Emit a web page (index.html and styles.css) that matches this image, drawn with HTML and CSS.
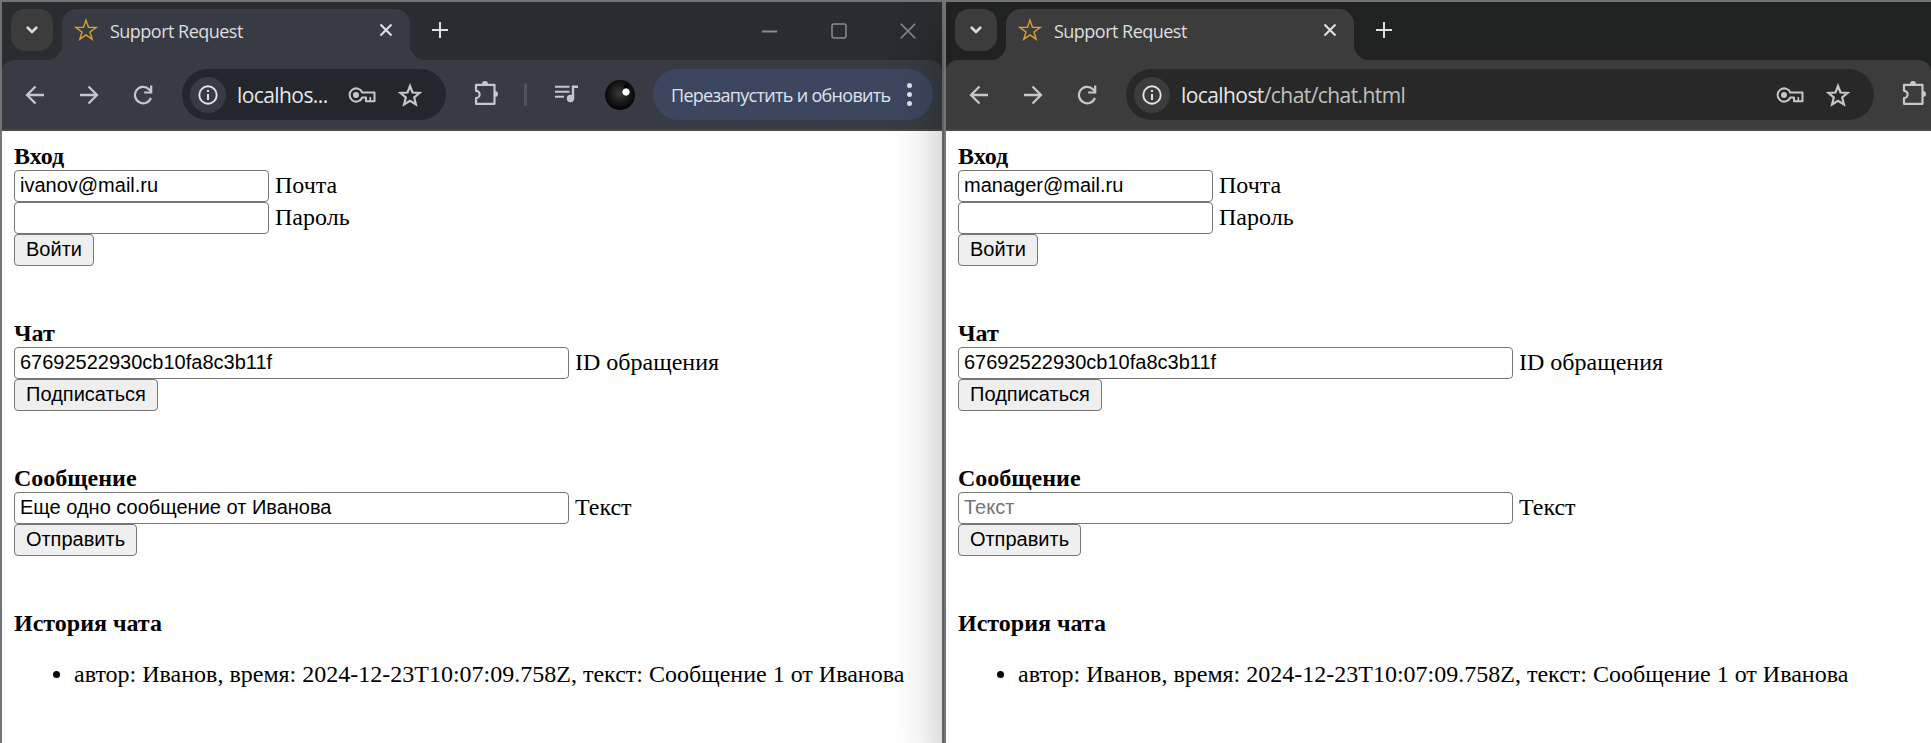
FILE: index.html
```html
<!DOCTYPE html>
<html lang="ru">
<head>
<meta charset="utf-8">
<title>Support Request</title>
<link rel="stylesheet" href="styles.css">
</head>
<body>
<svg width="0" height="0" class="defs">
  <symbol id="chevron" viewBox="0 0 14 10"><path d="M2 2l5 5 5-5" fill="none" stroke="currentColor" stroke-width="2.6"/></symbol>
  <symbol id="fav" viewBox="0 0 24 24"><path d="M12 2.2l2.500 7.200h7.700L16 13.900l2.200 7.300-6.200-4.300-6.200 4.300L8 13.900 1.800 9.400h7.700z" fill="none" stroke="#d9a12f" stroke-width="1.400"/></symbol>
  <symbol id="cross" viewBox="0 0 14 14"><path d="M1.500 1.500l11 11m0-11l-11 11" fill="none" stroke="currentColor" stroke-width="2.200"/></symbol>
  <symbol id="plus" viewBox="0 0 16 16"><path d="M8 0v16M0 8h16" fill="none" stroke="currentColor" stroke-width="2"/></symbol>
  <symbol id="back" viewBox="0 0 20 20"><path d="M19 10H2.500M10.500 1.500L2 10l8.500 8.500" fill="none" stroke="currentColor" stroke-width="2.300"/></symbol>
  <symbol id="forward" viewBox="0 0 20 20"><path d="M1 10h16.500M9.500 1.500L18 10l-8.500 8.500" fill="none" stroke="currentColor" stroke-width="2.300"/></symbol>
  <symbol id="reload" viewBox="0 0 20 20"><path d="M17.900 12.800A8.200 8.200 0 1 1 16 4.300L18 6.500M18.200 .5v7h-7" fill="none" stroke="currentColor" stroke-width="2.200"/></symbol>
  <symbol id="info" viewBox="0 0 20 20"><circle cx="10" cy="10" r="8.700" fill="none" stroke="currentColor" stroke-width="1.900"/><path d="M9 9h2v6H9zM9 5h2v2H9z" fill="currentColor"/></symbol>
  <symbol id="key" viewBox="0 0 28 16"><path d="M14.300 5.500A6.600 6.600 0 1 0 14.300 10.500H18V14.300H26.500V5.500z" fill="none" stroke="currentColor" stroke-width="2" stroke-linejoin="round"/><circle cx="8" cy="8" r="3" fill="currentColor"/><path d="M22.300 10v4" stroke="currentColor" stroke-width="1.600"/></symbol>
  <symbol id="star" viewBox="0 0 24 24"><path d="M12 3l2.500 6.500 7 .5-5.300 4.500 1.700 6.900L12 17.700l-5.900 3.700 1.700-6.900L2.500 10l7-.5z" fill="none" stroke="currentColor" stroke-width="2.200"/></symbol>
  <symbol id="puzzle" viewBox="0 0 26 26"><path d="M2 4.800h18.500v19H2V18a3.600 3.600 0 0 0 0-7.200z" fill="none" stroke="currentColor" stroke-width="2.200" stroke-linejoin="round"/><path d="M8 4a3 3 0 0 1 6 0zM21 11a3 3 0 0 1 0 6z" fill="currentColor"/></symbol>
  <symbol id="queue" viewBox="0 0 24 18"><path d="M0 1.800h14.500M0 6.800h14.500M0 11.800h9" stroke="currentColor" stroke-width="2"/><circle cx="15.500" cy="13.500" r="3.700" fill="currentColor"/><path d="M18 13.500V1.800h5" fill="none" stroke="currentColor" stroke-width="2.400"/></symbol>
</svg>
<div class="desktop">
  <section class="window first">
    <header class="strip">
      <div class="tabsearch"><svg class="i-chevron"><use href="#chevron"/></svg></div>
      <div class="tab"><svg class="i-fav"><use href="#fav"/></svg><span class="title">Support Request</span><svg class="i-cross"><use href="#cross"/></svg></div>
      <svg class="i-plus"><use href="#plus"/></svg>
      <div class="controls">
        <svg width="16" height="16"><path d="M0 8.500h15" stroke="currentColor" stroke-width="2"/></svg>
        <svg width="16" height="16"><rect x="1" y="1" width="14" height="14" rx="2" fill="none" stroke="currentColor" stroke-width="1.500"/></svg>
        <svg width="16" height="16"><path d="M.8.8l14.400 14.400m0-14.400L.8 15.200" stroke="currentColor" stroke-width="1.600"/></svg>
      </div>
    </header>
    <nav class="toolbar">
      <svg class="i-nav"><use href="#back"/></svg>
      <svg class="i-nav"><use href="#forward"/></svg>
      <svg class="i-nav"><use href="#reload"/></svg>
      <div class="address"><span class="site"><svg class="i-info"><use href="#info"/></svg></span><span class="url">localhos...</span><svg class="i-key"><use href="#key"/></svg><svg class="i-star"><use href="#star"/></svg></div>
      <svg class="i-puzzle"><use href="#puzzle"/></svg>
      <span class="divider"></span>
      <svg class="i-queue"><use href="#queue"/></svg>
      <span class="avatar"></span>
      <div class="update"><span class="update-text">Перезапустить и обновить</span><span class="dots"><i></i><i></i><i></i></span></div>
    </nav>
    <main class="page">
      <section><h2>Вход</h2>
        <div class="row"><input value="ivanov@mail.ru"><label>Почта</label></div>
        <div class="row"><input><label>Пароль</label></div>
        <button class="b-login">Войти</button></section>
      <section><h2>Чат</h2>
        <div class="row"><input class="wide" value="67692522930cb10fa8c3b11f"><label>ID обращения</label></div>
        <button class="b-sub">Подписаться</button></section>
      <section><h2>Сообщение</h2>
        <div class="row"><input class="wide" value="Еще одно сообщение от Иванова"><label>Текст</label></div>
        <button class="b-send">Отправить</button></section>
      <section><h2>История чата</h2>
        <ul><li>автор: Иванов, время: 2024-12-23T10:07:09.758Z, текст: Сообщение 1 от Иванова</li></ul></section>
    </main>
  </section>
  <section class="window second">
    <header class="strip">
      <div class="tabsearch"><svg class="i-chevron"><use href="#chevron"/></svg></div>
      <div class="tab"><svg class="i-fav"><use href="#fav"/></svg><span class="title">Support Request</span><svg class="i-cross"><use href="#cross"/></svg></div>
      <svg class="i-plus"><use href="#plus"/></svg>
    </header>
    <nav class="toolbar">
      <svg class="i-nav"><use href="#back"/></svg>
      <svg class="i-nav"><use href="#forward"/></svg>
      <svg class="i-nav"><use href="#reload"/></svg>
      <div class="address"><span class="site"><svg class="i-info"><use href="#info"/></svg></span><span class="url">localhost<span class="path">/chat/chat.html</span></span><svg class="i-key"><use href="#key"/></svg><svg class="i-star"><use href="#star"/></svg></div>
      <svg class="i-puzzle"><use href="#puzzle"/></svg>
    </nav>
    <main class="page">
      <section><h2>Вход</h2>
        <div class="row"><input value="manager@mail.ru"><label>Почта</label></div>
        <div class="row"><input><label>Пароль</label></div>
        <button class="b-login">Войти</button></section>
      <section><h2>Чат</h2>
        <div class="row"><input class="wide" value="67692522930cb10fa8c3b11f"><label>ID обращения</label></div>
        <button class="b-sub">Подписаться</button></section>
      <section><h2>Сообщение</h2>
        <div class="row"><input class="wide" placeholder="Текст"><label>Текст</label></div>
        <button class="b-send">Отправить</button></section>
      <section><h2>История чата</h2>
        <ul><li>автор: Иванов, время: 2024-12-23T10:07:09.758Z, текст: Сообщение 1 от Иванова</li></ul></section>
    </main>
  </section>
</div>
</body>
</html>
```

FILE: styles.css
```css
* { box-sizing: border-box; }
html, body { height: 743px; overflow: hidden; }
body { margin: 0; }
svg { display: block; flex: none; }
.defs { position: absolute; }
.desktop { display: flex; width: 1931px; height: 743px; overflow: hidden; }
.window { flex: none; height: 743px; background: #fff; border: 2px solid #737373; border-bottom: 0; font-family: "Open Sans", "Noto Sans", sans-serif; overflow: hidden; }
.first { --strip: #292c30; --bar: #393b44; --field: #24262e; --icon: #c3c5d0; --chip: #393b44; width: 944px; }
.second { --strip: #202221; --bar: #3c3c3c; --field: #282828; --icon: #c7c7c7; --chip: #3c3c3c; width: 987px; border-right: 0; position: relative; z-index: 1; box-shadow: 0 30px 48px rgba(0, 0, 0, .3); }

.strip { height: 58px; background: var(--strip); display: flex; padding: 7px 0 0 9px; color: #dedede; }
.tabsearch { width: 42px; height: 42px; border-radius: 14px; background: #3c3c3c; display: flex; align-items: center; justify-content: center; margin-right: 9px; }
.i-chevron { width: 14px; height: 10px; }
.tab { position: relative; width: 348px; height: 51px; border-radius: 15px 15px 0 0; background: var(--bar); display: flex; padding: 0 17px 0 12px; }
.tab::before, .tab::after { content: ""; position: absolute; bottom: 0; width: 15px; height: 15px; }
.tab::before { left: -15px; background: radial-gradient(circle at 0 0, transparent 14.5px, var(--bar) 15.5px); }
.tab::after { right: -15px; background: radial-gradient(circle at 100% 0, transparent 14.5px, var(--bar) 15.5px); }
.i-fav { width: 24px; height: 24px; margin-top: 9px; }
.title { margin-left: 12px; flex: 1; font-size: 18px; line-height: 44px; letter-spacing: -.52px; white-space: nowrap; }
.i-cross { width: 14px; height: 14px; margin-top: 14px; }
.i-plus { width: 16px; height: 16px; margin: 13px 0 0 22px; }
.controls { display: flex; gap: 53px; margin: 14px 26px 0 auto; color: #8b8c8f; }

.window { background: linear-gradient(var(--strip), var(--strip)) 0 0 / 100% 80px no-repeat #fff; }
.toolbar { height: 71px; background: var(--bar); border-radius: 12px 12px 0 0; border-bottom: 2px solid #484848; display: flex; align-items: center; padding: 0 0 0 23px; color: var(--icon); }
.toolbar > * { flex: none; }
.i-nav { width: 20px; height: 20px; margin-right: 34px; }
.address { width: 264px; height: 51px; border-radius: 26px; background: var(--field); display: flex; align-items: center; padding: 0 24px 0 8px; margin-left: -5px; }
.second .address { width: 748px; }
.site { width: 36px; height: 36px; border-radius: 50%; background: var(--chip); display: flex; align-items: center; justify-content: center; color: #e3e3e3; }
.i-info { width: 20px; height: 20px; }
.url { margin-left: 11px; flex: 1; font-size: 21px; line-height: 48px; letter-spacing: -.58px; color: #e6e6e6; white-space: nowrap; }
.path { color: #c0c0c0; }
.i-key { width: 28px; height: 16px; margin-right: 22px; }
.i-star { width: 24px; height: 24px; }
.address .i-key, .address .i-star { color: #c7c7c7; }
.i-puzzle { width: 26px; height: 26px; margin: 0 0 3px 28px; }
.divider { width: 3px; height: 23px; border-radius: 2px; background: #51545e; margin-left: 24px; }
.i-queue { width: 24px; height: 18px; margin: 0 0 2px 28px; }
.avatar { width: 30px; height: 30px; border-radius: 50%; margin-left: 26px; background: radial-gradient(circle at 21px 12px, #fff 3.2px, transparent 4px), radial-gradient(circle at 21px 7px, #000 2px, transparent 3px), radial-gradient(circle at 50% 45%, #3a3a3a, #000 75%); }
.update { width: 280px; height: 51px; border-radius: 26px; background: #3c475f; color: #dfe3ee; display: flex; align-items: center; margin-left: 18px; padding: 0 21px 0 18px; }
.update-text { flex: 1; font-size: 18px; line-height: 48px; letter-spacing: -.7px; white-space: nowrap; }
.dots { display: grid; gap: 4px; }
.dots i { width: 5px; height: 5px; border-radius: 50%; background: #dfe3ee; }

.page { padding: 12px 0 0 12px; font: 24px/26px "Liberation Serif", serif; color: #000; }
.page section { padding-bottom: 54px; }
h2 { margin: 0; padding-bottom: 1px; font-size: 24px; line-height: 26px; }
.row { display: flex; gap: 6px; height: 32px; }
.row label { line-height: 30px; }
input, button { height: 32px; border: 1px solid #767676; border-radius: 4px; font: 20px "Liberation Sans", sans-serif; color: #000; background: #fff; }
input { width: 255px; padding: 0 5px 1px; }
.wide { width: 555px; }
input::placeholder { color: #757575; opacity: 1; }
button { display: block; padding: 0 0 1px; background: #efefef; }
.b-login { width: 80px; }
.b-sub { width: 144px; }
.b-send { width: 123px; }
ul { margin: 24px 0 0; padding-left: 60px; }
li { white-space: nowrap; }
```
